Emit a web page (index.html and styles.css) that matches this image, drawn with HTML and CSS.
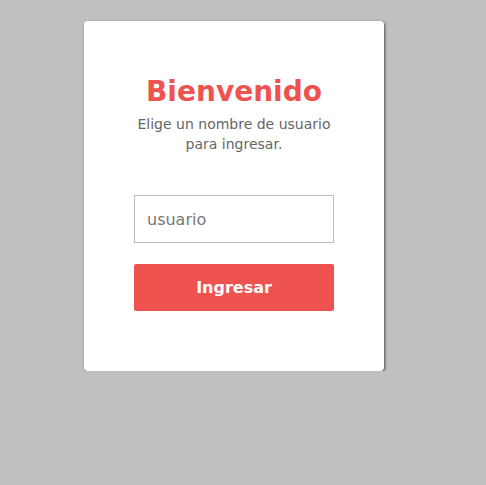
FILE: index.html
```html
<!DOCTYPE html>
<html lang="es">
<head>
<meta charset="utf-8">
<title>Bienvenido</title>
<link rel="stylesheet" href="styles.css">
</head>
<body>
<main class="page">
  <section class="card">
    <h1 class="title">Bienvenido</h1>
    <p class="subtitle">Elige un nombre de usuario<br>para ingresar.</p>
    <form class="form">
      <input class="field" type="text" placeholder="usuario">
      <button class="btn" type="button">Ingresar</button>
    </form>
  </section>
</main>
</body>
</html>
```

FILE: styles.css
```css
html, body {
  margin: 0;
  padding: 0;
  background: #c0c0c0;
  font-family: "DejaVu Sans", sans-serif;
}
.page {
  padding-top: 21px;
  padding-left: 84px;
}
.card {
  width: 300px;
  height: 350px;
  box-sizing: border-box;
  background: #fff;
  border-radius: 4px;
  box-shadow: 1px 1px 3px rgba(0,0,0,0.6);
  padding: 54px 50px 0;
  display: flex;
  flex-direction: column;
  align-items: center;
}
.title {
  margin: 0;
  font-size: 28px;
  font-weight: bold;
  color: #ef5350;
  line-height: 33px;
}
.subtitle {
  margin: 6px 0 0;
  font-size: 14px;
  line-height: 20px;
  color: #666;
  text-align: center;
}
.form {
  margin-top: 41px;
  width: 200px;
  display: flex;
  flex-direction: column;
  gap: 21px;
}
.field {
  box-sizing: border-box;
  width: 200px;
  height: 48px;
  margin: 0;
  border: 1px solid #bdbdbd;
  border-radius: 0;
  padding: 0 12px;
  font-family: "DejaVu Sans", sans-serif;
  font-size: 16px;
  color: #333;
  outline: none;
}
.field::placeholder {
  color: #777;
}
.btn {
  width: 200px;
  height: 47px;
  margin: 0;
  border: none;
  border-radius: 2px;
  background: #ef5350;
  color: #fff;
  font-family: "DejaVu Sans", sans-serif;
  font-size: 16px;
  font-weight: bold;
}
```
